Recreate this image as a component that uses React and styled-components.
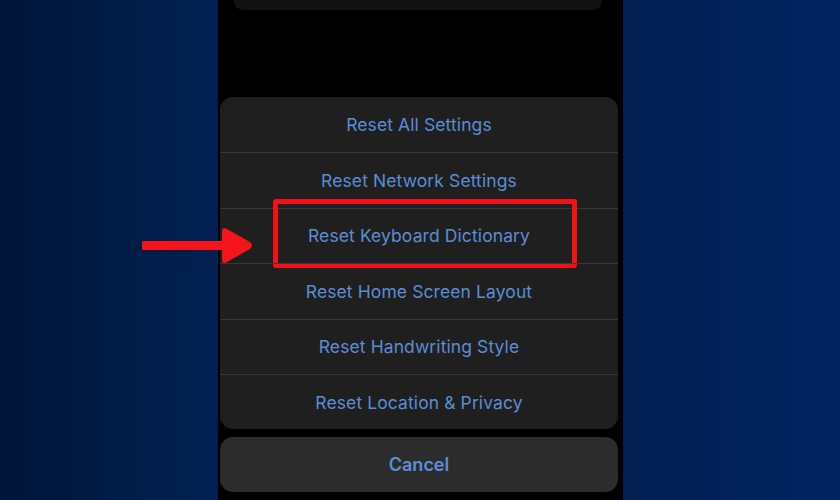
import styled, { createGlobalStyle } from "styled-components";

const Global = createGlobalStyle`
  html, body { margin: 0; padding: 0; }
  body { font-family: Inter, "Liberation Sans", Arial, sans-serif; }
`;

const Page = styled.div`
  width: 840px;
  height: 500px;
  display: grid;
  grid-template-columns: 218px 405px 217px;
  overflow: hidden;
`;

const Side = styled.div`
  background: ${(p) =>
    p.$left
      ? "linear-gradient(90deg, #00163a 0%, #001c45 55%, #012052 100%)"
      : "linear-gradient(90deg, #011f52 0%, #01215a 60%, #02255f 100%)"};
  position: relative;
`;

const Arrow = styled.svg`
  position: absolute;
  right: -38px;
  top: 226px;
  z-index: 3;
`;

const Phone = styled.div`
  background: #000;
  display: flex;
  flex-direction: column;
  padding: 0 5px 0 2px;
`;

const TopCard = styled.div`
  height: 10px;
  margin: 0 16px 0 14px;
  background: #121212;
  border-radius: 0 0 9px 9px;
  flex-shrink: 0;
`;

const Sheet = styled.div`
  margin-top: 87px;
  background: #1f1f1f;
  border-radius: 13px;
  display: flex;
  flex-direction: column;
`;

const Row = styled.div`
  height: 55.4px;
  display: flex;
  align-items: center;
  justify-content: center;
  color: #5b8dd4;
  font-size: 17.5px;
  letter-spacing: 0.1px;
  border-top: ${(p) => (p.$first ? "none" : "1px solid #383838")};
  position: relative;
  box-sizing: border-box;
`;

const Highlight = styled.div`
  position: absolute;
  left: 53px;
  right: 41px;
  top: -10px;
  bottom: -5px;
  border: 5px solid #f21117;
  border-radius: 3px;
  pointer-events: none;
`;

const Cancel = styled.div`
  margin-top: 8px;
  height: 55px;
  background: #2c2c2c;
  border-radius: 13px;
  display: flex;
  align-items: center;
  justify-content: center;
  color: #5b8fd6;
  font-size: 18px;
  font-weight: 600;
`;

const items = [
  "Reset All Settings",
  "Reset Network Settings",
  "Reset Keyboard Dictionary",
  "Reset Home Screen Layout",
  "Reset Handwriting Style",
  "Reset Location & Privacy",
];

export default function App() {
  return (
    <>
      <Global />
      <Page>
        <Side $left>
          <Arrow width="120" height="40" viewBox="0 0 120 40">
            <rect x="6" y="15" width="84" height="9" rx="1.5" fill="#f5141a" />
            <path
              d="M86 6 Q86 0 91 3 L114 16 Q118 19.5 114 23 L91 36 Q86 39 86 33 Z"
              fill="#f5141a"
            />
          </Arrow>
        </Side>
        <Phone>
          <TopCard />
          <Sheet>
            {items.map((t, i) => (
              <Row key={t} $first={i === 0}>
                {t}
                {i === 2 && <Highlight />}
              </Row>
            ))}
          </Sheet>
          <Cancel>Cancel</Cancel>
        </Phone>
        <Side />
      </Page>
    </>
  );
}
